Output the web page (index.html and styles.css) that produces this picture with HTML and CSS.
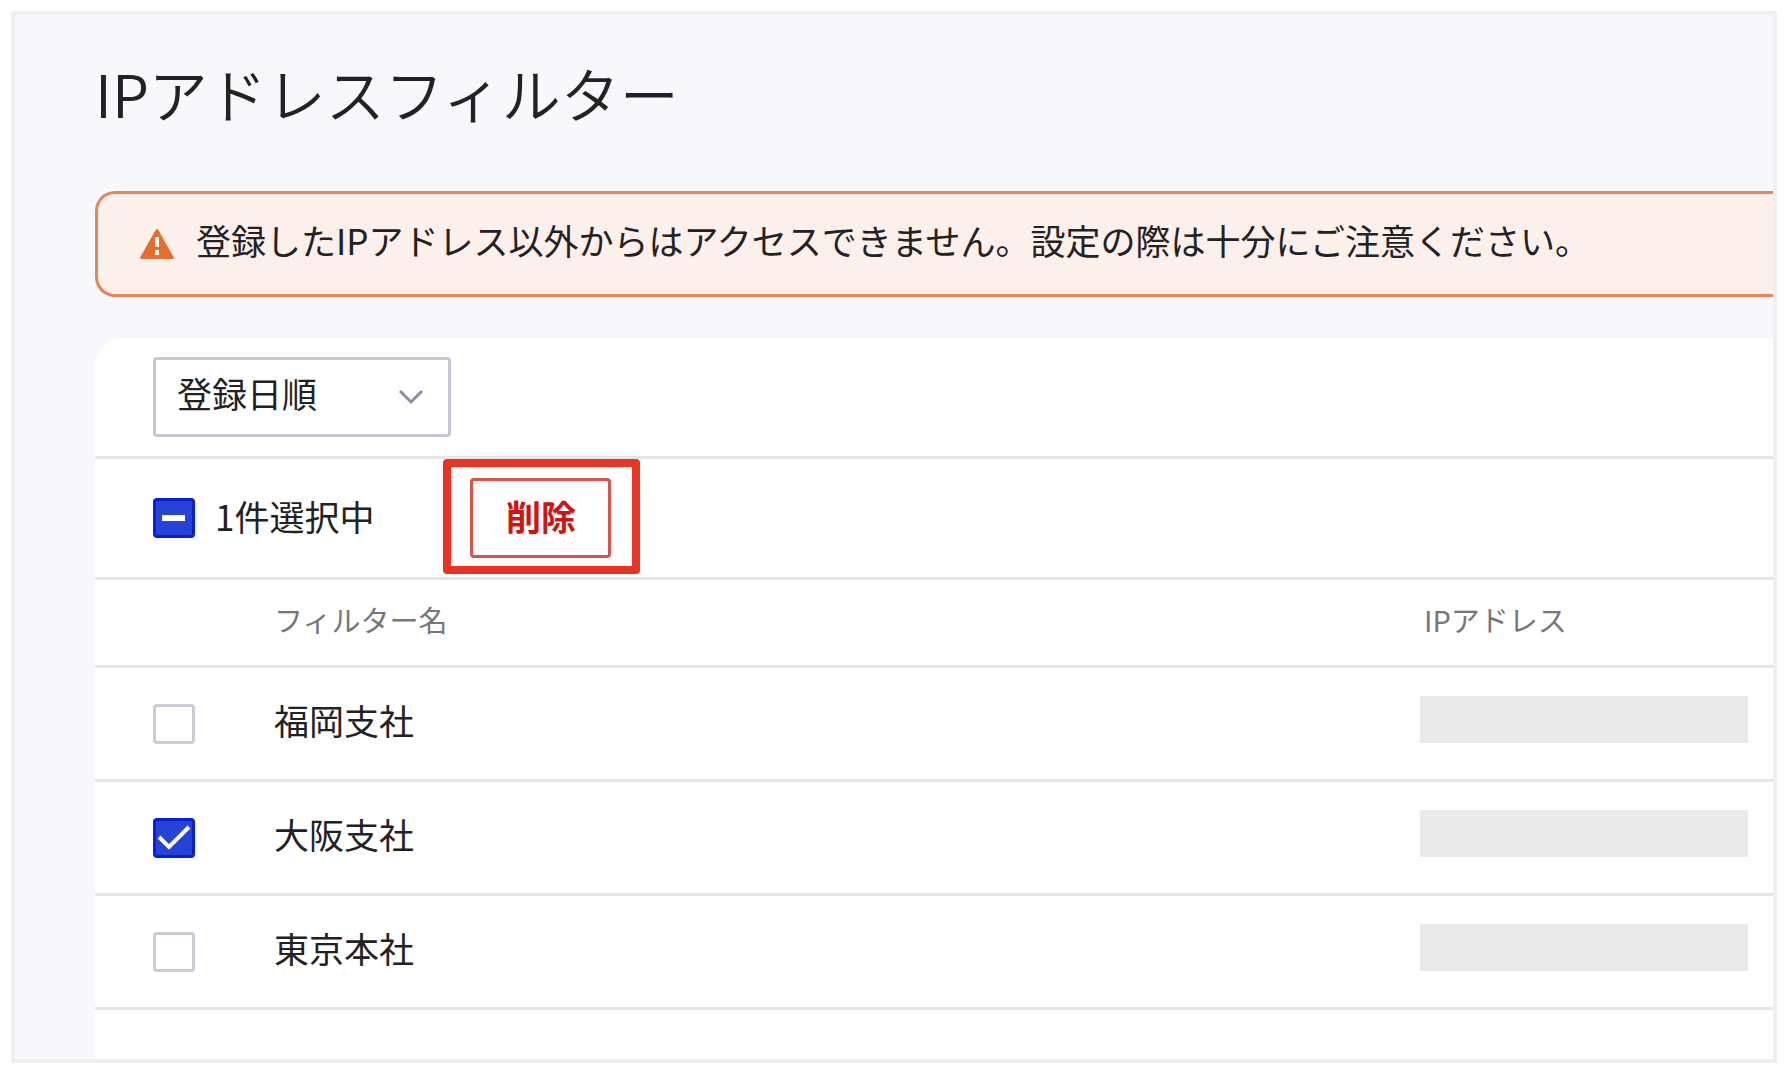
FILE: index.html
```
<!DOCTYPE html>
<html lang="ja">
<head>
    <meta charset="UTF-8">
    <meta name="viewport" content="width=device-width, initial-scale=1.0">
    <title>IPアドレスフィルター</title>
    <link rel="stylesheet" href="styles.css">
</head>
<body>

<main class="frame">
    <h1 class="title">IPアドレスフィルター</h1>

    <div class="alert" role="alert">
        <svg class="alert-icon" viewBox="0 0 34 30" aria-hidden="true">
            <path d="M15.6 1Q17 -1 18.4 1L33.6 28Q34.4 30 32.4 30H1.6Q-.4 30 .4 28Z" fill="#e86c30"/>
            <path d="M15 8h4v10h-4zM15 21h4v5h-4z" fill="#fff"/>
        </svg>
        <p>登録したIPアドレス以外からはアクセスできません。設定の際は十分にご注意ください。</p>
    </div>

    <section class="panel">
        <div class="toolbar">
            <div class="sort">
                <select class="sort-select" aria-label="並び順">
                    <option>登録日順</option>
                </select>
                <svg class="sort-arrow" viewBox="0 0 26 16" aria-hidden="true">
                    <path d="M2 2L13 13L24 2" fill="none" stroke="#8b8da6" stroke-width="3"/>
                </svg>
            </div>
        </div>

        <div class="selection">
            <input type="checkbox" class="check partial" id="selectAll" checked>
            <label for="selectAll">1件選択中</label>
            <div class="highlight">
                <button type="button" class="delete">削除</button>
            </div>
        </div>

        <table class="filters">
            <thead>
                <tr>
                    <th class="col-check"></th>
                    <th>フィルター名</th>
                    <th class="col-ip ip-head">IPアドレス</th>
                </tr>
            </thead>
            <tbody>
                <tr>
                    <td class="col-check"><input type="checkbox" class="check" id="fukuoka"></td>
                    <td><label for="fukuoka">福岡支社</label></td>
                    <td class="col-ip"><div class="mask"></div></td>
                </tr>
                <tr>
                    <td class="col-check"><input type="checkbox" class="check" id="osaka" checked></td>
                    <td><label for="osaka">大阪支社</label></td>
                    <td class="col-ip"><div class="mask"></div></td>
                </tr>
                <tr>
                    <td class="col-check"><input type="checkbox" class="check" id="tokyo"></td>
                    <td><label for="tokyo">東京本社</label></td>
                    <td class="col-ip"><div class="mask"></div></td>
                </tr>
            </tbody>
        </table>
    </section>
</main>

</body>
</html>
```
FILE: styles.css
```
* {
    box-sizing: border-box;
}
body {
    margin: 0;
    padding: 11px 13px 11px 11px;
    background: #fff;
    color: #222;
    font-family: "Noto Sans CJK JP", sans-serif;
    font-size: 35px;
    line-height: 48px;
}
.frame {
    padding: 40px 0 0 80px;
    border: 4px solid #efefef;
    background: #f7f8fc;
}
.title {
    margin: 0;
    font-size: 59px;
    font-weight: 350;
    line-height: 76px;
}
.alert {
    display: flex;
    align-items: center;
    gap: 22px;
    margin: 60px 0 41px;
    padding: 22px 0 30px 42px;
    border: 3px solid #ec845a;
    border-right: none;
    border-radius: 20px 0 0 20px;
    background: #fcf0eb;
}
.alert p {
    margin: 0;
}
.alert-icon {
    flex: none;
    width: 34px;
    height: 30px;
    margin-top: 8px;
}
.panel {
    padding-bottom: 49px;
    border-top-left-radius: 28px;
    background: #fff;
}
.toolbar {
    padding: 19px 58px;
    border-bottom: 3px solid #e4e5ed;
}
.sort {
    position: relative;
    width: 298px;
}
.sort-select {
    appearance: none;
    display: block;
    width: 100%;
    height: 80px;
    padding: 0 60px 8px 21px;
    border: 3px solid #c5c7d4;
    border-radius: 4px;
    background: #fff;
    color: inherit;
    font: inherit;
}
.sort-arrow {
    position: absolute;
    top: 32px;
    right: 27px;
    width: 26px;
    height: 16px;
    pointer-events: none;
}
.selection {
    display: flex;
    align-items: center;
    height: 121px;
    padding: 0 58px;
    border-bottom: 3px solid #e4e5ed;
}
.selection label {
    margin-left: 20px;
    padding-bottom: 4px;
}
.check {
    appearance: none;
    display: block;
    flex: none;
    width: 42px;
    height: 40px;
    margin: 0;
    border: 3px solid #c9cbd6;
    border-radius: 4px;
    background: #fff center / 42px 40px no-repeat;
}
.check:checked {
    border-color: #0a20d8;
    background-color: #2743d6;
    background-image: url("data:image/svg+xml,%3Csvg xmlns='http://www.w3.org/2000/svg' viewBox='0 0 42 40'%3E%3Cpath d='M6 19L16 29L36 9' fill='none' stroke='white' stroke-width='4'/%3E%3C/svg%3E");
}
.check.partial:checked {
    background-image: url("data:image/svg+xml,%3Csvg xmlns='http://www.w3.org/2000/svg' viewBox='0 0 42 40'%3E%3Cpath d='M9 20H32' stroke='white' stroke-width='6'/%3E%3C/svg%3E");
}
/* red ring around the delete button */
.highlight {
    position: relative;
    margin-left: 96px;
}
.highlight::after {
    content: "";
    position: absolute;
    inset: -19px -29px -16px -27px;
    border: 8px solid #ea3323;
    border-radius: 4px;
    pointer-events: none;
}
.delete {
    display: block;
    width: 141px;
    height: 80px;
    padding: 0 0 4px;
    border: 3px solid #d9534c;
    border-radius: 4px;
    background: #fff;
    color: #d0140f;
    font: inherit;
    font-weight: 700;
}
.filters {
    width: 100%;
    border-collapse: separate;
    border-spacing: 0;
    table-layout: fixed;
}
.filters th,
.filters td {
    padding: 0 0 8px;
    border-bottom: 3px solid #e4e5ed;
    text-align: left;
}
.filters th {
    height: 88px;
    color: #777;
    font-size: 29px;
    font-weight: 400;
}
.filters td {
    height: 114px;
}
.filters .col-check {
    width: 179px;
    padding: 0 0 0 58px;
}
.filters .col-ip {
    width: 353px;
}
.filters .ip-head {
    padding-left: 4px;
}
.mask {
    width: 328px;
    height: 47px;
    background: #e9eaec;
}
```
